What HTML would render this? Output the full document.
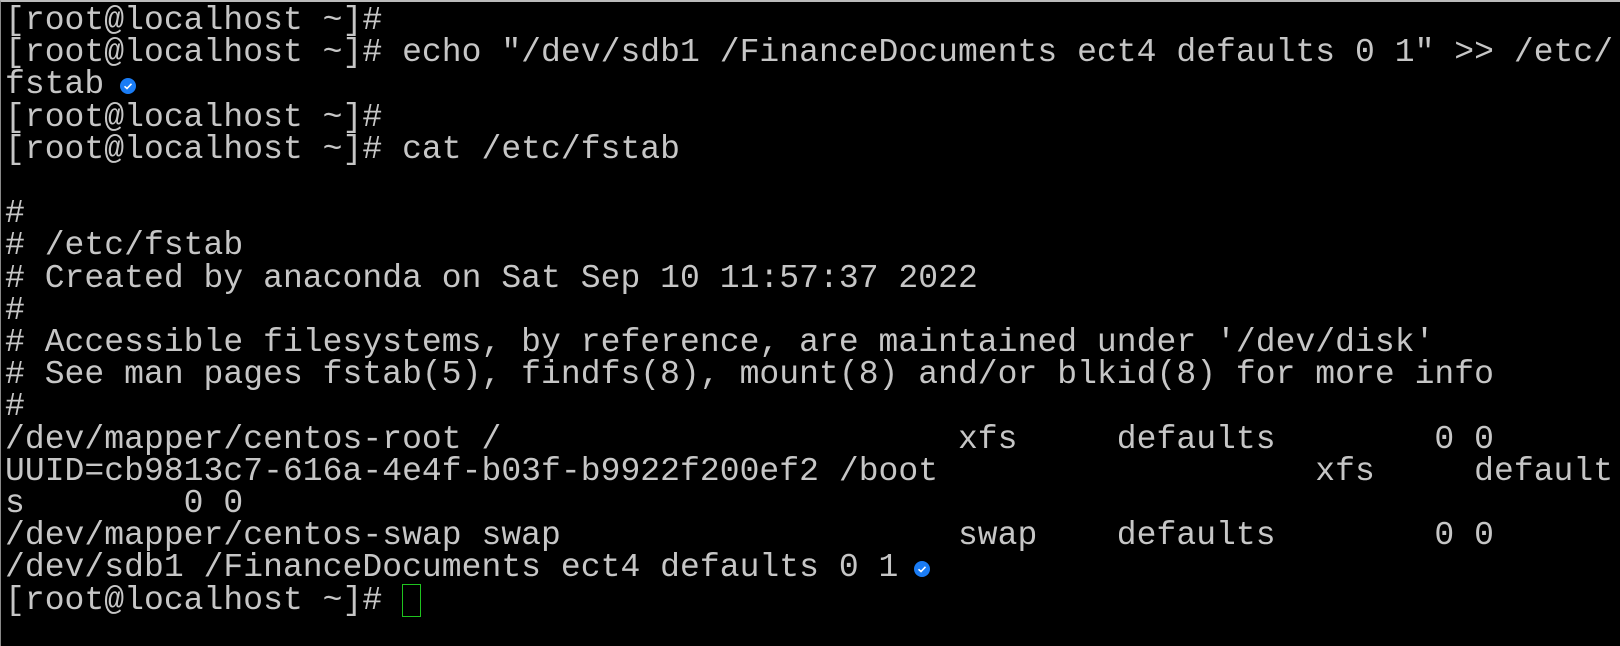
<!DOCTYPE html>
<html><head><meta charset="utf-8"><style>
html,body{margin:0;padding:0;background:#000;width:1620px;height:646px;overflow:hidden}
.t{position:absolute;left:0;top:0;width:1620px;height:646px;border-top:2px solid #bbb;border-left:1px solid #888;box-sizing:border-box}
pre{position:absolute;left:5px;top:5px;margin:0;font-family:"Liberation Mono",monospace;font-size:33px;letter-spacing:0.05px;line-height:32.2px;color:#c6c6c6;white-space:pre}
.ck{display:inline-block;width:16px;height:16px;border-radius:50%;background:#1a7cf5;vertical-align:middle;position:relative;top:1px;margin-left:-4px}
.ck svg{position:absolute;left:0;top:0}
.cur{display:inline-block;width:19px;height:33px;border:1px solid #1fc31f;box-sizing:border-box;vertical-align:top;position:relative;top:-1px;margin-left:0}
</style></head><body><div class="t"></div>
<pre>[root@localhost ~]#
[root@localhost ~]# echo "/dev/sdb1 /FinanceDocuments ect4 defaults 0 1" &gt;&gt; /etc/
fstab <span class="ck"><svg width="16" height="16"><path d="M4.5 8.3 L7 10.5 L11.5 5.8" stroke="#fff" stroke-width="1.6" fill="none"/></svg></span>
[root@localhost ~]#
[root@localhost ~]# cat /etc/fstab

#
# /etc/fstab
# Created by anaconda on Sat Sep 10 11:57:37 2022
#
# Accessible filesystems, by reference, are maintained under '/dev/disk'
# See man pages fstab(5), findfs(8), mount(8) and/or blkid(8) for more info
#
/dev/mapper/centos-root /                       xfs     defaults        0 0
UUID=cb9813c7-616a-4e4f-b03f-b9922f200ef2 /boot                   xfs     default
s        0 0
/dev/mapper/centos-swap swap                    swap    defaults        0 0
/dev/sdb1 /FinanceDocuments ect4 defaults 0 1 <span class="ck"><svg width="16" height="16"><path d="M4.5 8.3 L7 10.5 L11.5 5.8" stroke="#fff" stroke-width="1.6" fill="none"/></svg></span>
[root@localhost ~]# <span class="cur"></span></pre>
</body></html>
